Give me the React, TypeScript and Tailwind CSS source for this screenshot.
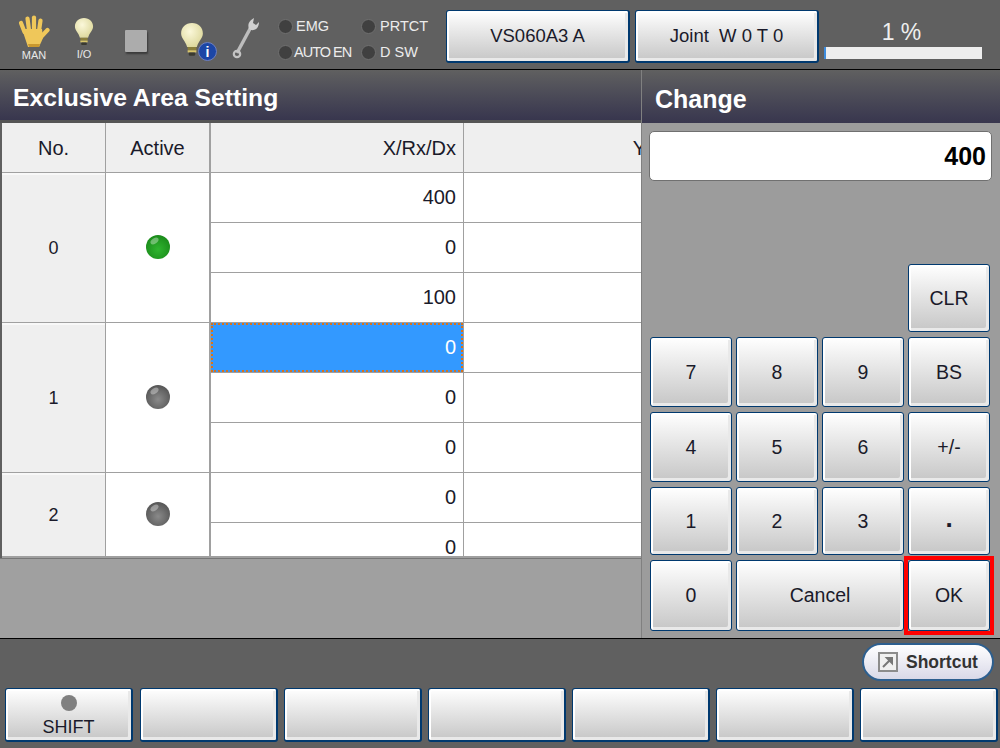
import type { ReactNode } from "react";

const FONT = "font-['Liberation_Sans',Arial,sans-serif]";

const KEY_CLASS =
  "flex items-center justify-center rounded-[3px] border border-[#00396f] bg-gradient-to-b from-[#ffffff] to-[#c6c6c6] text-[#1a1a2a] shadow-[inset_2px_2px_0_#ffffff,inset_-3px_-3px_0_#e9e9e9]";
const PAD_KEY_CLASS = `pt-[1px] text-[19.5px] ${KEY_CLASS}`;

const X_VALUES = ["400", "0", "100", "0", "0", "0", "0", "0"];

function HandIcon() {
  return (
    <svg width="32" height="33" viewBox="0 0 32 33">
      <g stroke="#efc75a" strokeWidth="4.2" strokeLinecap="round" fill="none">
        <path d="M6.5 17 L3 8" />
        <path d="M11 15 L9.5 3.5" />
        <path d="M16 15 L16 2.5" />
        <path d="M21 16 L22.5 5.5" />
        <path d="M23 22 L29.5 15" />
      </g>
      <path d="M4 14 L24 14 L25 23 L21 32 L10 32 Z" fill="#efc75a" />
      <path d="M10 29 L22 29 L21 32 L11 32 Z" fill="#c9982f" />
    </svg>
  );
}

function BulbIcon({ id, size }: { id: string; size: number }) {
  return (
    <svg width={size} height={size * 1.45} viewBox="0 0 22 32">
      <defs>
        <radialGradient id={id} cx="0.4" cy="0.35" r="0.7">
          <stop offset="0" stopColor="#fbf8da" />
          <stop offset="1" stopColor="#dcd79a" />
        </radialGradient>
      </defs>
      <path
        d="M11 1 C5 1 1 5 1 10.5 C1 15 5 17 6.5 23 L15.5 23 C17 17 21 15 21 10.5 C21 5 17 1 11 1 Z"
        fill={`url(#${id})`}
      />
      <rect x="7" y="23" width="8" height="3" fill="#8a7f3c" />
      <rect x="7" y="26" width="8" height="2" fill="#d9c66a" />
      <rect x="8" y="28" width="6" height="3" rx="1" fill="#3a3a30" />
    </svg>
  );
}

function WrenchIcon() {
  return (
    <svg width="28" height="42" viewBox="0 0 28 42">
      <path d="M5 36 L19 10" stroke="#bdbdbd" strokeWidth="3.4" fill="none" />
      <path
        d="M17 12 C15 7 18 3 22 1 L21 6 L24 8 L27 5 C27 10 24 14 19 13 Z"
        fill="#d0d0d0"
      />
      <circle cx="5" cy="37" r="3.2" fill="none" stroke="#c4c4c4" strokeWidth="2.2" />
    </svg>
  );
}

function Led({ id, from, to }: { id: string; from: string; to: string }) {
  return (
    <svg width="26" height="26" viewBox="0 0 26 26">
      <defs>
        <radialGradient id={id} cx="0.5" cy="0.6" r="0.6">
          <stop offset="0" stopColor={from} />
          <stop offset="1" stopColor={to} />
        </radialGradient>
      </defs>
      <circle cx="13" cy="13" r="12" fill={`url(#${id})`} />
      <ellipse cx="9.5" cy="7" rx="4.5" ry="2.6" fill="#ffffff" opacity="0.35" transform="rotate(-35 9.5 7)" />
    </svg>
  );
}

function StatusLight({ label, className }: { label: string; className: string }) {
  return (
    <div className="flex h-[20px] items-center">
      <span className="h-[15px] w-[15px] rounded-full border border-[#6f6f6f] bg-[#404040]" />
      <span className={`text-[14.5px] leading-none text-[#ececec] ${className}`}>{label}</span>
    </div>
  );
}

function HeaderCell({ children, className }: { children: ReactNode; className: string }) {
  return (
    <div className={`flex items-center bg-[#efefef] text-[20px] text-[#1a1a2a] ${className}`}>
      {children}
    </div>
  );
}

function SideCell({ label, rows }: { label: string; rows: string }) {
  return (
    <div
      className={`col-[1] flex items-center justify-center border-t-2 border-[#f8f8f8] bg-[#efefef] text-[18px] text-[#1a1a2a] ${rows}`}
    >
      {label}
    </div>
  );
}

function LedCell({ rows, children }: { rows: string; children: ReactNode }) {
  return (
    <div className={`col-[2] flex items-center justify-center bg-white pb-[1px] ${rows}`}>{children}</div>
  );
}

export default function App() {
  return (
    <div className={`flex h-[748px] w-[1000px] flex-col overflow-hidden bg-[#606060] ${FONT}`}>
      {/* status bar */}
      <div className="flex h-[70px] shrink-0 items-start border-b border-black pl-[18px]">
        <div className="mt-[15px] flex w-[32px] flex-col items-center">
          <HandIcon />
          <span className="mt-[2px] text-[11px] leading-none text-[#e8e8e8]">MAN</span>
        </div>
        <div className="mt-[17px] ml-[22px] flex w-[24px] flex-col items-center">
          <BulbIcon id="bulb-io" size={20} />
          <span className="mt-[3px] text-[11px] leading-none text-[#e8e8e8]">I/O</span>
        </div>
        <div className="mt-[30px] ml-[29px] h-[22px] w-[22px] rounded-[1px] bg-[#acacac] shadow-[1px_2px_2px_#3a3a3a]" />
        <div className="relative mt-[22px] ml-[33px] w-[38px]">
          <BulbIcon id="bulb-info" size={24} />
          <span className="absolute top-[20px] left-[18px] flex h-[19px] w-[19px] items-center justify-center rounded-full border border-[#6d7fc0] bg-[#1c46a6] text-[14px] font-bold leading-none text-white">
            i
          </span>
        </div>
        <div className="mt-[17px] ml-[14px]">
          <WrenchIcon />
        </div>
        <div className="mt-[16px] ml-[18px] w-[83px]">
          <StatusLight label="EMG" className="ml-[3px]" />
          <div className="mt-[6px]">
            <StatusLight label="AUTO EN" className="ml-[1px] tracking-[-1px]" />
          </div>
        </div>
        <div className="mt-[16px] w-[85px]">
          <StatusLight label="PRTCT" className="ml-[4px]" />
          <div className="mt-[6px]">
            <StatusLight label="D SW" className="ml-[4px]" />
          </div>
        </div>
        <div className={`mt-[10px] h-[53px] w-[184px] border-r-2 border-b-2 text-[18.5px] ${KEY_CLASS}`}>VS060A3 A</div>
        <div className={`mt-[10px] ml-[5px] h-[53px] w-[184px] border-r-2 border-b-2 text-[18.5px] ${KEY_CLASS}`}>Joint&nbsp; W 0 T 0</div>
        <div className="mt-[18px] ml-[5px] w-[158px]">
          <div className="pr-[3px] text-center text-[23px] leading-[29px] text-[#efefef]">1 %</div>
          <div className="h-[12px] bg-[#eeeeee]">
            <div className="h-full w-[2px] bg-[#3d8bdc]" />
          </div>
        </div>
      </div>

      {/* main area */}
      <div className="flex h-[568px] shrink-0 bg-[#a0a0a0]">
        <div className="w-[641px] shrink-0 overflow-hidden">
          <div className="flex h-[50px] items-center bg-gradient-to-b from-[#606060] to-[#38364e] pt-[5px] pl-[13px] text-[24.7px] font-bold text-white">
            Exclusive Area Setting
          </div>
          <div className="h-[3px] bg-[#555555]" />
          <div className="w-[716px] border-b border-[#777777] bg-[#606060] pl-[2px]">
            <div className="grid w-[714px] grid-cols-[103px_103px_253px_251px] grid-rows-[49px_repeat(7,49px)_33px] gap-px border-b-2 border-[#a0a0a0] bg-[#a0a0a0]">
              <HeaderCell className="justify-center">No.</HeaderCell>
              <HeaderCell className="justify-center">Active</HeaderCell>
              <HeaderCell className="justify-end border-l border-[#a0a0a0] pr-[7px]">X/Rx/Dx</HeaderCell>
              <HeaderCell className="justify-end pr-[9px]">Y/Ry/Dy</HeaderCell>

              <SideCell label="0" rows="row-[2/span_3]" />
              <LedCell rows="row-[2/span_3]">
                <Led id="led-0" from="#2fb52f" to="#1a8a1a" />
              </LedCell>
              <SideCell label="1" rows="row-[5/span_3]" />
              <LedCell rows="row-[5/span_3]">
                <Led id="led-1" from="#8a8a8a" to="#555555" />
              </LedCell>
              <SideCell label="2" rows="row-[8/span_2]" />
              <LedCell rows="row-[8/span_2]">
                <Led id="led-2" from="#8a8a8a" to="#555555" />
              </LedCell>

              {X_VALUES.map((value, i) => (
                <div key={i} className="contents">
                  <div className="col-[3] overflow-hidden border-l border-[#a0a0a0]">
                    <div
                      className={
                        i === 3
                          ? "h-full border-2 border-dotted border-[#d9731a] bg-[#3399ff] pr-[5px] text-right text-[20px] leading-[44px] text-white"
                          : "h-full bg-white pr-[7px] text-right text-[20px] leading-[48px] text-[#1a1a2a]"
                      }
                    >
                      {value}
                    </div>
                  </div>
                  <div className="col-[4] bg-white" />
                </div>
              ))}
            </div>
          </div>
        </div>

        {/* change panel */}
        <div className="flex w-[359px] shrink-0 flex-col border-l border-[#808080] bg-[#9c9c9c]">
          <div className="flex h-[53px] items-center bg-gradient-to-b from-[#606060] to-[#38364e] pt-[7px] pl-[13px] text-[25px] font-bold text-white">
            Change
          </div>
          <div className="mt-[8px] ml-[7px] flex h-[50px] w-[343px] items-center justify-end rounded-[5px] border border-[#707070] bg-white pt-[2px] pr-[5px] text-[25px] font-bold text-black">
            400
          </div>
          <div className="mt-[83px] ml-[8px] grid w-[340px] grid-cols-[repeat(4,82px)] grid-rows-[68px_70px_70px_68px_71px] gap-x-[4px] gap-y-[5px]">
            <button className={`col-[4] ${PAD_KEY_CLASS}`}>CLR</button>
            {["7", "8", "9", "BS", "4", "5", "6", "+/-", "1", "2", "3"].map((key) => (
              <button key={key} className={PAD_KEY_CLASS}>
                {key}
              </button>
            ))}
            <button className={`items-start font-bold leading-[60px] ${KEY_CLASS} text-[26px]`}>.</button>
            <button className={PAD_KEY_CLASS}>0</button>
            <button className={`col-span-2 ${PAD_KEY_CLASS}`}>Cancel</button>
            <div className="z-10 m-[-4px] flex border-4 border-[#ff0000]">
              <button className={`flex-1 ${PAD_KEY_CLASS}`}>OK</button>
            </div>
          </div>
        </div>
      </div>

      {/* function keys */}
      <div className="flex flex-1 flex-col border-t border-black">
        <div className="mt-[4px] mr-[6px] flex h-[38px] w-[132px] items-center gap-[8px] self-end rounded-full border-2 border-[#2d5f8f] bg-gradient-to-b from-[#ffffff] to-[#d9d9e8] pl-[14px]">
          <svg width="20" height="20" viewBox="0 0 20 20">
            <rect x="1" y="1" width="18" height="18" fill="#f0f0f0" stroke="#8c8c8c" strokeWidth="2" />
            <path d="M5 15 L13 7 M9 6 L14 6 L14 11 Z" stroke="#777777" strokeWidth="2" fill="#777777" />
          </svg>
          <span className="text-[17.5px] font-bold text-[#333333]">Shortcut</span>
        </div>
        <div className="mt-[7px] ml-[5px] flex gap-[6px]">
          <button className={`mr-px h-[54px] w-[128px] flex-col gap-0 border-r-2 border-b-2 pt-[5px] text-[18px] ${KEY_CLASS}`}>
            <span className="ml-[1px] h-[16px] w-[16px] rounded-full bg-[#808080]" />
            <span className="mt-[4px] leading-[24px]">SHIFT</span>
          </button>
          {[0, 1, 2, 3, 4, 5].map((i) => (
            <button key={i} className={`h-[54px] w-[138px] border-r-2 border-b-2 ${KEY_CLASS}`} />
          ))}
        </div>
      </div>
    </div>
  );
}
